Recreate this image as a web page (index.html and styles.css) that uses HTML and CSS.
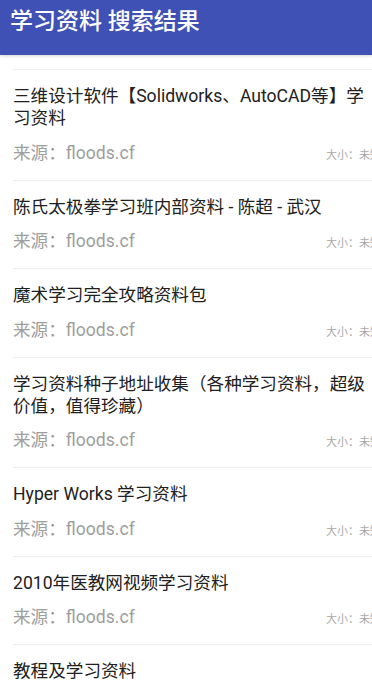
FILE: index.html
```html
<!DOCTYPE html>
<html lang="zh-CN">
<head>
<meta charset="utf-8">
<link rel="stylesheet" href="styles.css">
</head>
<body>
<header class="appbar">学习资料 搜索结果</header>
<ul class="list">
  <li class="item">
    <div class="title">三维设计软件【Solidworks、AutoCAD等】学习资料</div>
    <div class="meta"><span class="source">来源：floods.cf</span><span class="size">大小：未知</span></div>
  </li>
  <li class="item">
    <div class="title">陈氏太极拳学习班内部资料 - 陈超 - 武汉</div>
    <div class="meta"><span class="source">来源：floods.cf</span><span class="size">大小：未知</span></div>
  </li>
  <li class="item">
    <div class="title">魔术学习完全攻略资料包</div>
    <div class="meta"><span class="source">来源：floods.cf</span><span class="size">大小：未知</span></div>
  </li>
  <li class="item">
    <div class="title">学习资料种子地址收集（各种学习资料，超级价值，值得珍藏）</div>
    <div class="meta"><span class="source">来源：floods.cf</span><span class="size">大小：未知</span></div>
  </li>
  <li class="item">
    <div class="title">Hyper Works 学习资料</div>
    <div class="meta"><span class="source">来源：floods.cf</span><span class="size">大小：未知</span></div>
  </li>
  <li class="item">
    <div class="title">2010年医教网视频学习资料</div>
    <div class="meta"><span class="source">来源：floods.cf</span><span class="size">大小：未知</span></div>
  </li>
  <li class="item">
    <div class="title">教程及学习资料</div>
    <div class="meta"><span class="source">来源：floods.cf</span><span class="size">大小：未知</span></div>
  </li>
</ul>
</body>
</html>
```

FILE: styles.css
```css
html, body {
  margin: 0;
  padding: 0;
  background: #ffffff;
  overflow: hidden;
  font-family: Roboto, "Noto Sans CJK SC", "Noto Sans", sans-serif;
}

.appbar {
  height: 55px;
  box-sizing: border-box;
  padding: 7px 0 0 10px;
  line-height: 30px;
  font-size: 23px;
  font-weight: 500;
  color: #ffffff;
  background: #3f51b5;
  box-shadow: 0 1px 3px rgba(0, 0, 0, 0.18);
  position: relative;
}

.list {
  list-style: none;
  margin: 14px 0 0 0;
  padding: 0 0 0 13px;
}

.item {
  border-top: 1px solid #eeeeee;
  padding: 15px 0 13px 0;
}

.title {
  font-size: 17.6px;
  line-height: 22px;
  color: #212121;
}

.meta {
  display: flex;
  align-items: baseline;
  justify-content: space-between;
  margin-top: 12.5px;
  margin-right: -9px;
  line-height: 23px;
}

.source {
  font-size: 17.6px;
  color: #9e9e9e;
}

.size {
  font-size: 11px;
  color: #a8a8a8;
  white-space: nowrap;
}
```
